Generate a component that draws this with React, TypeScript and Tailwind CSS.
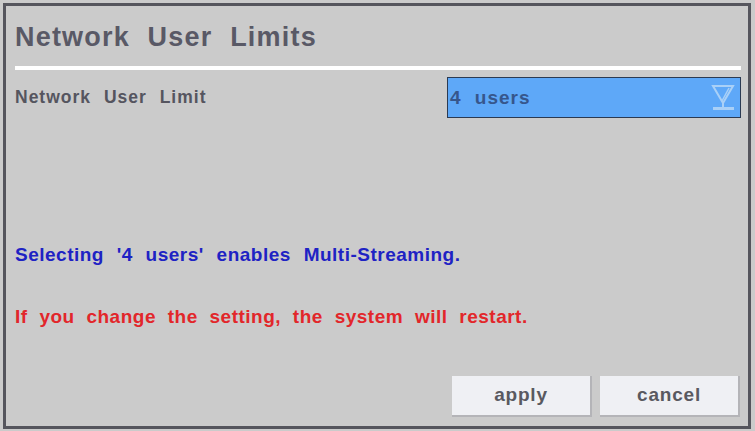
import React from 'react';

const font = "font-['Liberation_Sans',Arial,sans-serif]";

const DropdownArrow: React.FC = () => (
  <svg width="26" height="30" viewBox="0 0 26 30" className="shrink-0">
    <path d="M3 3 L23 3 L13 20 Z" fill="none" stroke="#a9d0f7" strokeWidth="2" />
    <path d="M19 5 L12 18" stroke="#a9d0f7" strokeWidth="1.5" />
    <path d="M13 20 L13 24" stroke="#a9d0f7" strokeWidth="2" />
    <rect x="3" y="24" width="21" height="3" fill="#a9d0f7" />
  </svg>
);

const App: React.FC = () => {
  return (
    <div className={`w-[755px] h-[431px] bg-[#cbcbcb] pt-[3px] pl-[3px] ${font}`}>
      <div className="w-[748px] h-[426px] border-[3px] border-[#55555d] flex flex-col pl-[9px] pr-[7px] pt-[18px]">
        <h1 className="text-[27px] leading-[27px] h-[27px] font-bold text-[#595966] tracking-[1.2px] [word-spacing:9px]">
          Network User Limits
        </h1>
        <div className="mt-[15px] h-[4px] bg-white w-[726px]" />
        <div className="mt-[7px] flex items-center justify-between h-[41px]">
          <span className="text-[17.5px] leading-none font-bold text-[#55555f] tracking-[1px] [word-spacing:7px]">
            Network User Limit
          </span>
          <div className="w-[294px] h-[41px] bg-[#5ea8f8] border-[1.5px] border-[#2b3a52] flex items-center justify-between pl-[2px] pr-[4px]">
            <span className="text-[19px] leading-none font-bold text-[#36568c] tracking-[1px] [word-spacing:7px]">4 users</span>
            <DropdownArrow />
          </div>
        </div>
        <p className="mt-[127px] text-[19px] leading-[19px] font-bold text-[#1e22c4] tracking-[0.5px] [word-spacing:7px]">
          Selecting '4 users' enables Multi-Streaming.
        </p>
        <p className="mt-[43px] text-[19px] leading-[19px] font-bold text-[#e2262a] tracking-[0.5px] [word-spacing:6px]">
          If you change the setting, the system will restart.
        </p>
        <div className="mt-[50px] flex justify-end gap-[8px] pr-[1px]">
          <button className="w-[140px] h-[41px] bg-[#eff0f4] border-r-2 border-b-2 border-[#b4b4b8] text-[19px] font-bold text-[#595960] tracking-[0.8px]">
            apply
          </button>
          <button className="w-[140px] h-[41px] bg-[#eff0f4] border-r-2 border-b-2 border-[#b4b4b8] text-[19px] font-bold text-[#595960] tracking-[0.8px]">
            cancel
          </button>
        </div>
      </div>
    </div>
  );
};

export default App;
